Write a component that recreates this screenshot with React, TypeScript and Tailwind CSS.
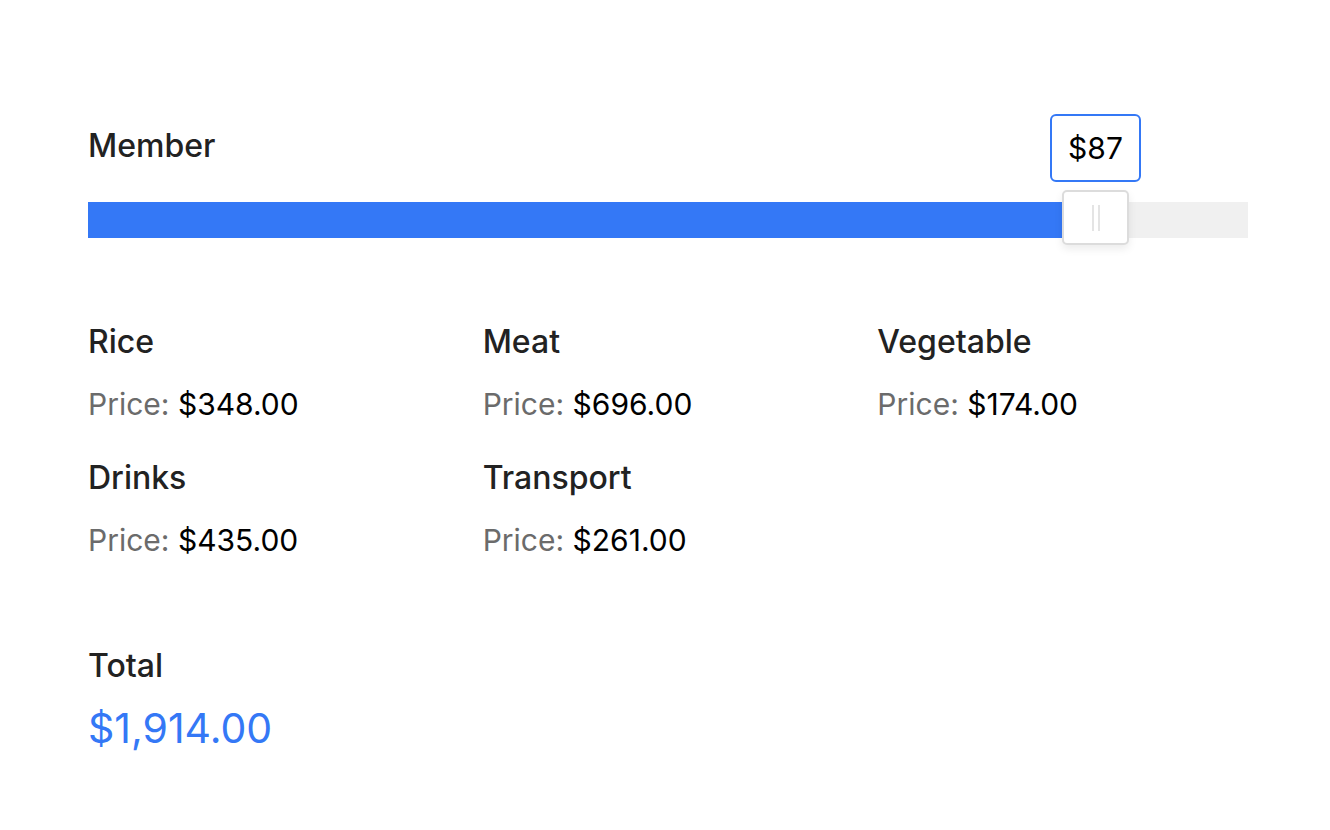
import React from 'react';

const items = [
  { name: 'Rice', price: 348 },
  { name: 'Meat', price: 696 },
  { name: 'Vegetable', price: 174 },
  { name: 'Drinks', price: 435 },
  { name: 'Transport', price: 261 },
];

const fmt = (n: number) =>
  '$' + n.toLocaleString('en-US', { minimumFractionDigits: 2, maximumFractionDigits: 2 });

export default function App() {
  const total = items.reduce((s, i) => s + i.price, 0);

  return (
    <div className="min-h-[830px] bg-white pl-[88px] pr-[82px] pt-[124px] font-['Inter',sans-serif] text-[#222]">
      <div className="relative">
        <div className="text-[32px] font-medium leading-[44px]">Member</div>

        <div className="mt-[34px] flex h-[36px] w-full bg-[#f0f0f0]">
          <div className="h-full w-[974px] bg-[#3478f6]" />
        </div>

        {/* value bubble */}
        <div className="absolute left-[962px] top-[-10px] flex h-[68px] w-[91px] items-center justify-center rounded-[6px] border-2 border-[#3478f6] bg-white text-[30px] text-black">
          $87
        </div>

        {/* handle */}
        <div className="absolute left-[974px] top-[66px] flex h-[55px] w-[67px] items-center justify-center gap-[4px] rounded-[5px] border-2 border-[#dcdcdc] bg-white shadow-[0_4px_8px_rgba(0,0,0,0.08)]">
          <span className="h-[26px] w-[2px] bg-[#e4e4e4]" />
          <span className="h-[26px] w-[2px] bg-[#e4e4e4]" />
        </div>
      </div>

      <div className="mt-[84px] grid grid-cols-3 gap-x-6 gap-y-[34px]">
        {items.map((it) => (
          <div key={it.name}>
            <div className="text-[32px] font-medium leading-[40px]">{it.name}</div>
            <div className="mt-[22px] text-[30px] leading-[40px]">
              <span className="text-[#6b6b6b]">Price: </span>
              <span className="text-black">{fmt(it.price)}</span>
            </div>
          </div>
        ))}
      </div>

      <div className="mt-[86px]">
        <div className="text-[32px] font-medium leading-[40px]">Total</div>
        <div className="mt-[18px] text-[41px] leading-[48px] text-[#3478f6]">{fmt(total)}</div>
      </div>
    </div>
  );
}
